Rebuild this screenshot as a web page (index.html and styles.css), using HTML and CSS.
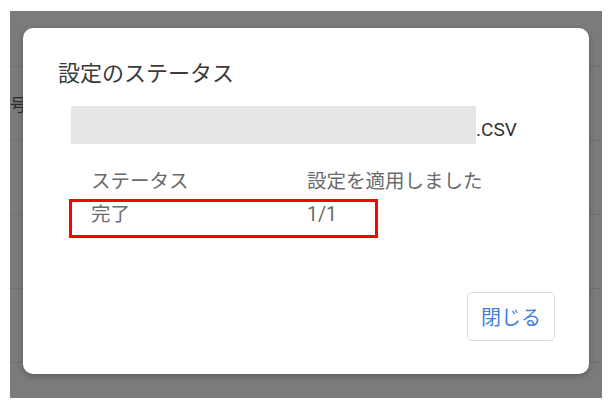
FILE: index.html
```html
<!DOCTYPE html>
<html lang="ja">
<head>
    <meta charset="UTF-8">
    <meta name="viewport" content="width=device-width, initial-scale=1.0">
    <title>設定のステータス</title>
    <link rel="stylesheet" href="styles.css">
</head>
<body>
    <div class="screen">
        <!-- page behind the overlay -->
        <div class="page-bg">
            <div class="bg-row bg-head"></div>
            <div class="bg-row"><span class="bg-cell">号</span></div>
            <div class="bg-row"></div>
            <div class="bg-row"></div>
            <div class="bg-row"></div>
        </div>

        <div class="dialog">
            <h2 class="dialog-title">設定のステータス</h2>

            <div class="file-row">
                <span class="file-mask"></span>
                <span class="file-ext">.CSV</span>
            </div>

            <div class="status-table">
                <div class="status-row">
                    <span>ステータス</span>
                    <span>設定を適用しました</span>
                </div>
                <div class="status-row marked">
                    <span>完了</span>
                    <span>1/1</span>
                </div>
            </div>

            <div class="dialog-actions">
                <button class="btn-close">閉じる</button>
            </div>
        </div>
    </div>
</body>
</html>
```

FILE: styles.css
```css
body {
    margin: 0;
    background-color: #fff;
    font-family: Roboto, "Noto Sans CJK JP", sans-serif;
}

.screen {
    position: relative;
    margin: 11px 8px 10px 10px;
    height: 387px;
    background-color: #7a7b7d;
    overflow: hidden;
}

.bg-row {
    height: 73px;
    border-bottom: 1px solid #6f7072;
    display: flex;
    align-items: center;
}

.bg-head {
    height: 55px;
}

.bg-cell {
    margin-left: 0;
    font-family: "Noto Sans CJK JP", sans-serif;
    font-size: 17px;
    color: #2b2b2b;
}

.dialog {
    position: absolute;
    left: 13px;
    top: 17px;
    width: 566px;
    height: 346px;
    box-sizing: border-box;
    padding: 31px 34px 33px;
    background-color: #fff;
    border-radius: 10px;
    box-shadow: 0 2px 6px rgba(0, 0, 0, 0.25);
    display: flex;
    flex-direction: column;
}

.dialog-title {
    margin: 0 0 0 1px;
    font-size: 22px;
    font-weight: normal;
    line-height: 30px;
    color: #3a3a3a;
}

.file-row {
    display: flex;
    align-items: flex-end;
    margin: 17px 0 0 14px;
}

.file-mask {
    width: 405px;
    height: 38px;
    background-color: #e5e5e5;
}

.file-ext {
    font-size: 19px;
    line-height: 22px;
    margin-bottom: 3px;
    color: #333;
}

.status-table {
    margin: 21px 0 0 34px;
}

.status-row {
    position: relative;
    display: grid;
    grid-template-columns: 216px auto;
    height: 33px;
    line-height: 33px;
    font-size: 19.5px;
    color: #6a6a6a;
}

.status-row.marked::after {
    content: "";
    position: absolute;
    left: -22px;
    top: 1px;
    width: 309px;
    height: 39px;
    box-sizing: border-box;
    border: 3px solid #ff0000;
}

.dialog-actions {
    margin-top: auto;
    display: flex;
    justify-content: flex-end;
}

.btn-close {
    width: 88px;
    height: 49px;
    padding: 0;
    background-color: #fff;
    border: 1px solid #dadce0;
    border-radius: 5px;
    font-family: "Noto Sans CJK JP", sans-serif;
    font-size: 20px;
    color: #3f7fe0;
    cursor: pointer;
}
```
